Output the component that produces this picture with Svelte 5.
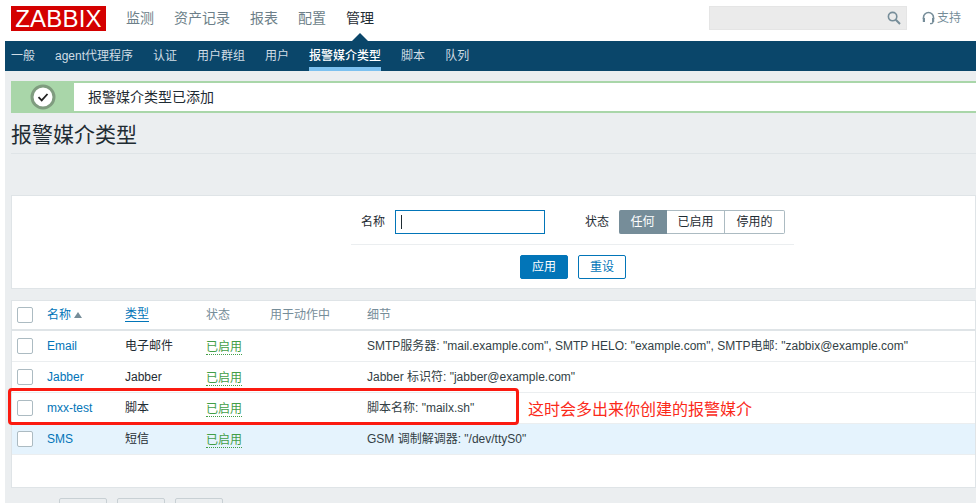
<script>
  const topNav = ["监测", "资产记录", "报表", "配置", "管理"];
  const subNav = ["一般", "agent代理程序", "认证", "用户群组", "用户", "报警媒介类型", "脚本", "队列"];
  const rows = [
    { name: "Email", type: "电子邮件", detail: 'SMTP服务器: "mail.example.com", SMTP HELO: "example.com", SMTP电邮: "zabbix@example.com"' },
    { name: "Jabber", type: "Jabber", detail: 'Jabber 标识符: "jabber@example.com"' },
    { name: "mxx-test", type: "脚本", detail: '脚本名称: "mailx.sh"' },
    { name: "SMS", type: "短信", detail: 'GSM 调制解调器: "/dev/ttyS0"', hover: true }
  ];
</script>

<div class="page">
  <header class="top">
    <div class="logo">ZABBIX</div>
    <nav class="top-nav">
      {#each topNav as item}
        <span class:current={item === "管理"}>{item}</span>
      {/each}
    </nav>
    <div class="search">
      <svg width="14" height="14" viewBox="0 0 14 14" fill="none" stroke="#768d99" stroke-width="1.6">
        <circle cx="5.6" cy="5.6" r="4.2" />
        <path d="M8.8 8.8l4.2 4.2" stroke-width="2" />
      </svg>
    </div>
    <div class="support">
      <svg width="13" height="14" viewBox="0 0 13 14" fill="none" stroke="#768d99" stroke-width="1.6">
        <path d="M1.5 8V6.500a5 5 0 0 1 10 0V8" />
        <rect x="0.8" y="7" width="2.2" height="4" fill="#768d99" stroke="none" />
        <rect x="10" y="7" width="2.2" height="4" fill="#768d99" stroke="none" />
        <path d="M11 11c0 1-1 1.700-3 1.700" stroke-width="1.200" />
      </svg>
      <span>支持</span>
    </div>
  </header>

  <nav class="sub-nav">
    {#each subNav as item}
      <span class:active={item === "报警媒介类型"}>{item}</span>
    {/each}
  </nav>

  <main class="content">
    <div class="message">
      <div class="message-icon">
        <svg width="26" height="26" viewBox="0 0 26 26">
          <circle cx="13" cy="13" r="11" fill="#fff" stroke="#7f9c7f" stroke-width="3" />
          <path d="M8.500 13.200l3.200 3.200 5.800-6.400" fill="none" stroke="#222" stroke-width="1.800" />
        </svg>
      </div>
      <div class="message-text">报警媒介类型已添加</div>
    </div>

    <h1>报警媒介类型</h1>

    <section class="filter">
      <div class="filter-row">
        <label for="name">名称</label>
        <div class="name-input" id="name"><i></i></div>
        <span class="status-label">状态</span>
        <div class="segments">
          <span class="on">任何</span>
          <span>已启用</span>
          <span>停用的</span>
        </div>
      </div>
      <div class="filter-actions">
        <button class="primary">应用</button>
        <button>重设</button>
      </div>
    </section>

    <section class="list">
      <div class="row head">
        <span class="check"></span>
        <span class="sorted">名称<b></b></span>
        <span class="link">类型</span>
        <span>状态</span>
        <span>用于动作中</span>
        <span>细节</span>
      </div>
      {#each rows as row}
        <div class="row" class:hover={row.hover}>
          <span class="check"></span>
          <span class="name">{row.name}</span>
          <span>{row.type}</span>
          <span><em>已启用</em></span>
          <span></span>
          <span class="detail">{row.detail}</span>
        </div>
      {/each}
    </section>

    <div class="pager">
      <span></span><span></span><span></span>
    </div>
  </main>

  <div class="callout"></div>
  <div class="callout-text">这时会多出来你创建的报警媒介</div>
</div>

<style>
  :global(body) {
    margin: 0;
    background: #fff;
  }

  .page {
    position: relative;
    width: 976px;
    height: 503px;
    overflow: hidden;
    font-family: "Liberation Sans", "Noto Sans CJK SC", sans-serif;
    font-size: 12px;
    line-height: 14px;
    color: #1f2c33;
  }

  .top {
    display: flex;
    height: 41px;
    margin-left: 5px;
    padding-left: 6px;
    box-sizing: border-box;
  }

  .logo {
    width: 95px;
    height: 25px;
    margin-top: 6px;
    background: #d40000;
    color: #fff;
    font-size: 24px;
    line-height: 25px;
    text-align: center;
    letter-spacing: 0.2px;
  }

  .top-nav {
    display: flex;
    gap: 20px;
    margin-left: 20px;
    padding-top: 10px;
    font-size: 14px;
    line-height: 16px;
    color: #6d7f89;
    flex: 1;
    position: relative;
  }

  .top-nav .current {
    position: relative;
    color: #1f2c33;
  }

  .top-nav .current::after {
    content: "";
    position: absolute;
    left: 6px;
    top: 23px;
    border: 8px solid transparent;
    border-top: 0;
    border-bottom-color: #0a466a;
  }

  .search {
    display: flex;
    align-items: center;
    justify-content: flex-end;
    box-sizing: border-box;
    width: 198px;
    height: 24px;
    margin-top: 6px;
    padding-right: 5px;
    background: #ebebeb;
    border: 1px solid #e5e5e5;
  }

  .support {
    display: flex;
    align-items: center;
    gap: 2px;
    width: 69px;
    height: 24px;
    margin-top: 6px;
    padding-left: 15px;
    box-sizing: border-box;
    color: #768d99;
  }

  .sub-nav {
    display: flex;
    gap: 20px;
    height: 30px;
    margin-left: 5px;
    padding-left: 6px;
    background: #0a466a;
    color: #d0dde5;
    line-height: 30px;
  }

  .sub-nav span {
    box-sizing: border-box;
    height: 30px;
  }

  .sub-nav .active {
    color: #fff;
    font-weight: 500;
    border-bottom: 4px solid #7dc1ef;
  }

  .content {
    box-sizing: border-box;
    height: 432px;
    margin-left: 5px;
    padding: 10px 0 0 6px;
    background: #ebeef0;
  }

  .message {
    display: flex;
    box-sizing: border-box;
    height: 32px;
    border: solid #a9d6a9;
    border-width: 2px 0;
    background: #a9d6a9;
  }

  .message-icon {
    display: flex;
    align-items: center;
    justify-content: center;
    box-sizing: border-box;
    width: 63px;
  }

  .message-text {
    flex: 1;
    padding-left: 14px;
    background: #fff;
    font-size: 14px;
    line-height: 28px;
  }

  h1 {
    box-sizing: border-box;
    height: 41px;
    margin: 0 0 41px;
    padding: 9px 0 0;
    border-bottom: 1px solid #dfe4e7;
    font-size: 21px;
    line-height: 26px;
    font-weight: 400;
  }

  .filter {
    box-sizing: border-box;
    height: 94px;
    padding-top: 14px;
    background: #fff;
    border: 1px solid #dfe4e7;
  }

  .filter-row {
    display: flex;
    align-items: center;
    box-sizing: border-box;
    width: 443px;
    height: 35px;
    margin-left: 339px;
    padding: 0 0 10px 10px;
    border-bottom: 1px solid #ebeef0;
  }

  .name-input {
    position: relative;
    box-sizing: border-box;
    width: 150px;
    height: 24px;
    margin-left: 10px;
    border: 1px solid #0275b8;
  }

  .name-input i {
    position: absolute;
    left: 5px;
    top: 4px;
    width: 1px;
    height: 14px;
    background: #1f2c33;
  }

  .status-label {
    margin-left: 40px;
  }

  .segments {
    display: flex;
    margin-left: 10px;
    height: 24px;
    line-height: 22px;
    text-align: center;
  }

  .segments span {
    box-sizing: border-box;
    width: 58px;
    border: 1px solid #acbbc2;
    border-left: 0;
  }

  .segments span:last-child {
    width: 60px;
    border-radius: 0 2px 2px 0;
  }

  .segments .on {
    width: 48px;
    background: #768d99;
    border-color: #768d99;
    border-radius: 2px 0 0 2px;
    color: #fff;
  }

  .filter-actions {
    display: flex;
    gap: 10px;
    margin: 10px 0 0 508px;
  }

  button {
    box-sizing: border-box;
    width: 48px;
    height: 24px;
    padding: 0;
    background: #fff;
    border: 1px solid #0275b8;
    border-radius: 2px;
    color: #0275b8;
    font: inherit;
  }

  button.primary {
    background: #0275b8;
    color: #fff;
  }

  .list {
    box-sizing: border-box;
    height: 188px;
    margin-top: 11px;
    background: #fff;
    border: 1px solid #dfe4e7;
  }

  .row {
    display: grid;
    grid-template-columns: 30px 78px 81px 64px 97px 1fr;
    align-items: center;
    box-sizing: border-box;
    height: 31px;
    padding-left: 5px;
    border-bottom: 1px solid #ebeef0;
    color: #1f2c33;
  }

  .row.head {
    height: 30px;
    border-bottom: 2px solid #dfe4e7;
    color: #768d99;
  }

  .row.hover {
    background: #e5f3fd;
  }

  .check {
    box-sizing: border-box;
    width: 16px;
    height: 16px;
    background: #fff;
    border: 1px solid #acbbc2;
    border-radius: 2px;
  }

  .sorted {
    display: flex;
    align-items: center;
    gap: 3px;
    color: #0275b8;
  }

  .sorted b {
    border: 4px solid transparent;
    border-top: 0;
    border-bottom: 6px solid #768d99;
  }

  .link {
    justify-self: start;
    color: #0275b8;
    border-bottom: 1px solid #0275b8;
    line-height: 13px;
  }

  .name {
    color: #0275b8;
  }

  em {
    display: inline-block;
    padding-top: 2px;
    font-style: normal;
    color: #429e47;
    border-bottom: 1px dotted #429e47;
    line-height: 14px;
  }

  .detail {
    white-space: nowrap;
    color: #333f46;
  }

  .pager {
    display: flex;
    gap: 10px;
    margin: 10px 0 0 48px;
  }

  .pager span {
    box-sizing: border-box;
    width: 48px;
    height: 24px;
    background: #ebeef0;
    border: 1px solid #c8d0d4;
    border-radius: 2px;
  }

  .callout {
    position: absolute;
    left: 8px;
    top: 388px;
    width: 511px;
    height: 37px;
    box-sizing: border-box;
    border: 3px solid #fb1a10;
    border-radius: 4px;
  }

  .callout-text {
    position: absolute;
    left: 528px;
    top: 398px;
    font-size: 16px;
    line-height: 24px;
    color: #fb2a1a;
  }
</style>
